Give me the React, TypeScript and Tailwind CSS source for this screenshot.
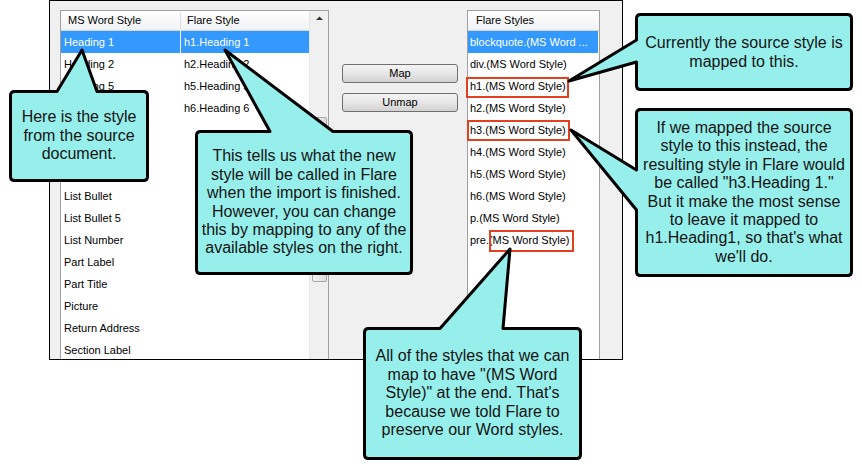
// rows 4-7 of the source column sit under the first callout, so they stay empty
const leftRows: [string, string][] = [
  ["Heading 1", "h1.Heading 1"],
  ["Heading 2", "h2.Heading 2"],
  ["Heading 5", "h5.Heading 5"],
  ["", "h6.Heading 6"],
  ["", ""],
  ["", ""],
  ["", ""],
  ["List Bullet", ""],
  ["List Bullet 5", ""],
  ["List Number", ""],
  ["Part Label", ""],
  ["Part Title", ""],
  ["Picture", ""],
  ["Return Address", ""],
  ["Section Label", ""],
]

const flareStyles = [
  "blockquote.(MS Word ...",
  "div.(MS Word Style)",
  "h1.(MS Word Style)",
  "h2.(MS Word Style)",
  "h3.(MS Word Style)",
  "h4.(MS Word Style)",
  "h5.(MS Word Style)",
  "h6.(MS Word Style)",
  "p.(MS Word Style)",
  "pre.(MS Word Style)",
]

type Box = { x1: number; y1: number; x2: number; y2: number }

// callout outline: rounded box with the pointer cut into one edge
function calloutPath(b: Box, side: "top" | "left", a: number, c: number, tx: number, ty: number) {
  const r = 4
  const { x1, y1, x2, y2 } = b
  const top =
    side === "top"
      ? `L ${a} ${y1} L ${tx} ${ty} L ${c} ${y1} L ${x2 - r} ${y1}`
      : `L ${x2 - r} ${y1}`
  const left =
    side === "left"
      ? `L ${x1} ${c} L ${tx} ${ty} L ${x1} ${a} L ${x1} ${y1 + r}`
      : `L ${x1} ${y1 + r}`
  return `M ${x1 + r} ${y1} ${top} Q ${x2} ${y1} ${x2} ${y1 + r} L ${x2} ${y2 - r} Q ${x2} ${y2} ${x2 - r} ${y2} L ${x1 + r} ${y2} Q ${x1} ${y2} ${x1} ${y2 - r} ${left} Q ${x1} ${y1} ${x1 + r} ${y1} Z`
}

const callouts = [
  calloutPath({ x1: 10.5, y1: 91.5, x2: 147.5, y2: 180.5 }, "top", 57, 97, 82, 50),
  calloutPath({ x1: 196.5, y1: 131.5, x2: 411.5, y2: 273.5 }, "top", 270, 333, 225, 50),
  calloutPath({ x1: 636.5, y1: 14.5, x2: 851.5, y2: 89.5 }, "left", 40, 62, 569, 81),
  calloutPath({ x1: 636.5, y1: 109.5, x2: 851.5, y2: 275.5 }, "left", 170, 210, 571, 130),
  calloutPath({ x1: 364.5, y1: 328.5, x2: 580.5, y2: 458.5 }, "top", 440, 503, 510, 249),
]

function WinButton({ label }: { label: string }) {
  return (
    <button className="h-[19px] w-[116px] rounded-[3px] border border-[#707070] bg-gradient-to-b from-[#f4f4f4] via-[#e6e6e6] to-[#d2d2d2] text-[11px] leading-none text-black">
      {label}
    </button>
  )
}

function CalloutText({ className, lines }: { className: string; lines: string[] }) {
  return (
    <div
      className={`absolute flex flex-col items-center justify-center whitespace-nowrap text-center text-[16px] leading-[18.4px] text-[#141414] ${className}`}
    >
      {lines.map((l) => (
        <span key={l}>{l}</span>
      ))}
    </div>
  )
}

export default function App() {
  return (
    <div className="relative h-[469px] w-[862px] overflow-hidden bg-white font-['Liberation_Sans',Arial,sans-serif]">
      {/* Dialog screenshot */}
      <div className="ml-[49px] flex h-[360px] w-[574px] overflow-hidden border border-black bg-[#f0f0f0] pl-[10px] pt-[9px] text-[11px] text-black">
        {/* Source styles list */}
        <div className="flex h-[380px] w-[269px] shrink-0 border border-[#a0a0a0] bg-white">
          <div className="w-[248px]">
            <div className="flex h-[20px] items-center border-b border-[#d5d5d5] bg-gradient-to-b from-white to-[#f1f2f4]">
              <div className="w-[120px] border-r border-[#e0e0e0] pl-[7px]">MS Word Style</div>
              <div className="pl-[6px]">Flare Style</div>
            </div>
            {leftRows.map(([word, flare], i) => (
              <div key={i} className="flex h-[22px] items-center">
                <div className={`mr-[1px] flex h-full w-[119px] items-center pl-[3px] ${i === 0 ? "bg-[#3399ff] text-white" : ""}`}>
                  {word}
                </div>
                <div className={`flex h-full w-[128px] items-center pl-[3px] ${i === 0 ? "bg-[#3399ff] text-white" : ""}`}>
                  {flare}
                </div>
              </div>
            ))}
          </div>
          {/* Scrollbar */}
          <div className="flex w-[19px] flex-col items-center border-l border-[#e6e6e6] bg-[#f0f0f0]">
            <svg width="9" height="18" viewBox="0 0 9 18">
              <path d="M1 9 L4.5 5.5 L8 9 Z" fill="#333" />
            </svg>
            <div className="mt-[88px] h-[165px] w-[15px] rounded-[2px] border border-[#a8a8a8] bg-gradient-to-r from-[#f3f3f3] to-[#dcdcdc]" />
          </div>
        </div>

        {/* Map / Unmap */}
        <div className="flex w-[138px] shrink-0 flex-col gap-[10px] pl-[13px] pt-[54px]">
          <WinButton label="Map" />
          <WinButton label="Unmap" />
        </div>

        {/* Flare styles list */}
        <div className="relative h-[380px] w-[133px] shrink-0 border border-[#a0a0a0] bg-white">
          <div className="flex h-[20px] items-center border-b border-[#d5d5d5] bg-gradient-to-b from-white to-[#f1f2f4] pl-[8px]">
            Flare Styles
          </div>
          {flareStyles.map((s, i) => (
            <div
              key={s}
              className={`flex h-[22px] items-center whitespace-nowrap pl-[2px] ${i === 0 ? "mr-[1px] bg-[#3399ff] text-white" : ""}`}
            >
              {s}
            </div>
          ))}
          {/* red highlight boxes */}
          <div className="absolute left-[-2px] top-[66px] h-[21px] w-[103px] border-2 border-[#e2401f]" />
          <div className="absolute left-[-1px] top-[109px] h-[21px] w-[103px] border-2 border-[#e2401f]" />
          <div className="absolute left-[21px] top-[219px] h-[22px] w-[85px] border-2 border-[#e2401f]" />
        </div>
      </div>

      {/* Callouts */}
      <svg className="absolute left-0 top-0" width="862" height="469" viewBox="0 0 862 469">
        {callouts.map((d, i) => (
          <path key={i} d={d} fill="#97efeb" stroke="#000" strokeWidth="3" strokeLinejoin="round" />
        ))}
      </svg>
      <CalloutText className="left-[9px] top-[90px] h-[92px] w-[140px]" lines={["Here is the style", "from the source", "document."]} />
      <CalloutText
        className="left-[195px] top-[130px] h-[145px] w-[218px]"
        lines={[
          "This tells us what the new",
          "style will be called in Flare",
          "when the import is finished.",
          "However, you can change",
          "this by mapping to any of the",
          "available styles on the right.",
        ]}
      />
      <CalloutText className="left-[635px] top-[13px] h-[79px] w-[218px]" lines={["Currently the source style is", "mapped to this."]} />
      <CalloutText
        className="left-[635px] top-[108px] h-[169px] w-[218px]"
        lines={[
          "If we mapped the source",
          "style to this instead, the",
          "resulting style in Flare would",
          'be called "h3.Heading 1."',
          "But it make the most sense",
          "to leave it mapped to",
          "h1.Heading1, so that's what",
          "we'll do.",
        ]}
      />
      <CalloutText
        className="left-[363px] top-[327px] h-[133px] w-[219px]"
        lines={[
          "All of the styles that we can",
          'map to have "(MS Word',
          'Style)" at the end. That\'s',
          "because we told Flare to",
          "preserve our Word styles.",
        ]}
      />
    </div>
  )
}
